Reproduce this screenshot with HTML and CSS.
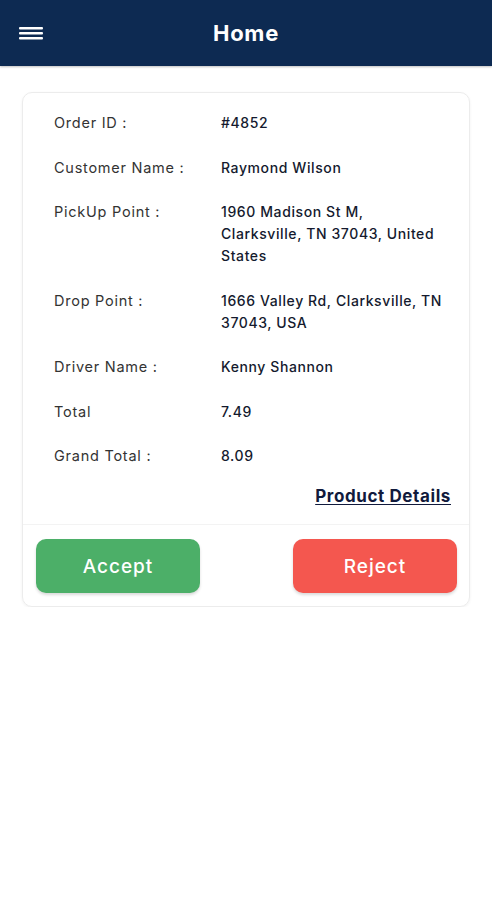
FILE: index.html
```html
<!DOCTYPE html>
<html lang="en">
<head>
<meta charset="utf-8">
<title>Home</title>
<link rel="stylesheet" href="styles.css">
</head>
<body>
<header class="appbar">
  <button class="menu-btn" aria-label="Menu">
    <svg width="24" height="14" viewBox="0 0 24 14"><rect x="0" y="0" width="24" height="2.4" rx="1" fill="#fff"/><rect x="0" y="5" width="24" height="2.4" rx="1" fill="#fff"/><rect x="0" y="10" width="24" height="2.4" rx="1" fill="#fff"/></svg>
  </button>
  <h1 class="title">Home</h1>
</header>
<main class="content">
  <section class="card">
    <div class="details">
      <dl class="rows">
        <div class="row"><dt>Order ID :</dt><dd>#4852</dd></div>
        <div class="row"><dt>Customer Name :</dt><dd>Raymond Wilson</dd></div>
        <div class="row"><dt>PickUp Point :</dt><dd>1960 Madison St M,<br>Clarksville, TN 37043, United<br>States</dd></div>
        <div class="row"><dt>Drop Point :</dt><dd>1666 Valley Rd, Clarksville, TN<br>37043, USA</dd></div>
        <div class="row"><dt>Driver Name :</dt><dd>Kenny Shannon</dd></div>
        <div class="row"><dt>Total</dt><dd>7.49</dd></div>
        <div class="row"><dt>Grand Total :</dt><dd>8.09</dd></div>
      </dl>
      <div class="link-row"><a class="product-link" href="#">Product Details</a></div>
    </div>
    <div class="actions">
      <button class="btn btn-accept">Accept</button>
      <button class="btn btn-reject">Reject</button>
    </div>
  </section>
</main>
</body>
</html>
```
FILE: styles.css
```css
* { box-sizing: border-box; }
html, body { margin: 0; padding: 0; background: #ffffff; }
body { font-family: Inter, "Open Sans", "Liberation Sans", sans-serif; color: #222; }

.appbar {
  height: 66px;
  background: #0d2a52;
  display: flex;
  align-items: center;
  position: relative;
  box-shadow: 0 1px 2px rgba(0,0,0,0.25);
}
.menu-btn {
  background: none;
  border: 0;
  padding: 0;
  margin-left: 19px;
  margin-top: 2px;
  width: 24px;
  height: 14px;
  display: flex;
}
.title {
  position: absolute;
  left: 0; right: 0;
  text-align: center;
  margin: 0;
  font-size: 22px;
  font-weight: 700;
  letter-spacing: 0.7px;
  color: #fff;
  pointer-events: none;
}

.content { padding: 26px 22px 0; }

.card {
  border: 1px solid #ececec;
  border-radius: 10px;
  box-shadow: 0 1px 3px rgba(0,0,0,0.06);
  overflow: hidden;
}
.details {
  padding: 19px 18px 17px 31px;
  border-bottom: 1px solid #f3f3f3;
}
.rows { margin: 0; display: flex; flex-direction: column; gap: 22.5px; }
.row { display: grid; grid-template-columns: 167px 1fr; }
.row dt, .row dd { margin: 0; font-size: 14px; line-height: 22px; letter-spacing: 0.6px; }
.row dt { color: #333; font-weight: 400; font-size: 14.5px; letter-spacing: 0.75px; }
.row dd { color: #141a2e; font-weight: 500; letter-spacing: 0.6px; }

.link-row { display: flex; justify-content: flex-end; margin-top: 18px; }
.product-link {
  font-size: 17px;
  line-height: 22px;
  font-weight: 700;
  letter-spacing: 0.6px;
  color: #111a3c;
  text-decoration: underline;
  text-underline-offset: 2px;
}

.actions {
  display: flex;
  justify-content: space-between;
  padding: 14px 12px 13px 13px;
}
.btn {
  width: 164px;
  height: 54px;
  border: 0;
  border-radius: 10px;
  color: #fff;
  font-family: inherit;
  font-size: 19px;
  font-weight: 500;
  letter-spacing: 1px;
  box-shadow: 0 2px 3px rgba(0,0,0,0.15);
}
.btn-accept { background: #4caf68; }
.btn-reject { background: #f4574f; }
```
